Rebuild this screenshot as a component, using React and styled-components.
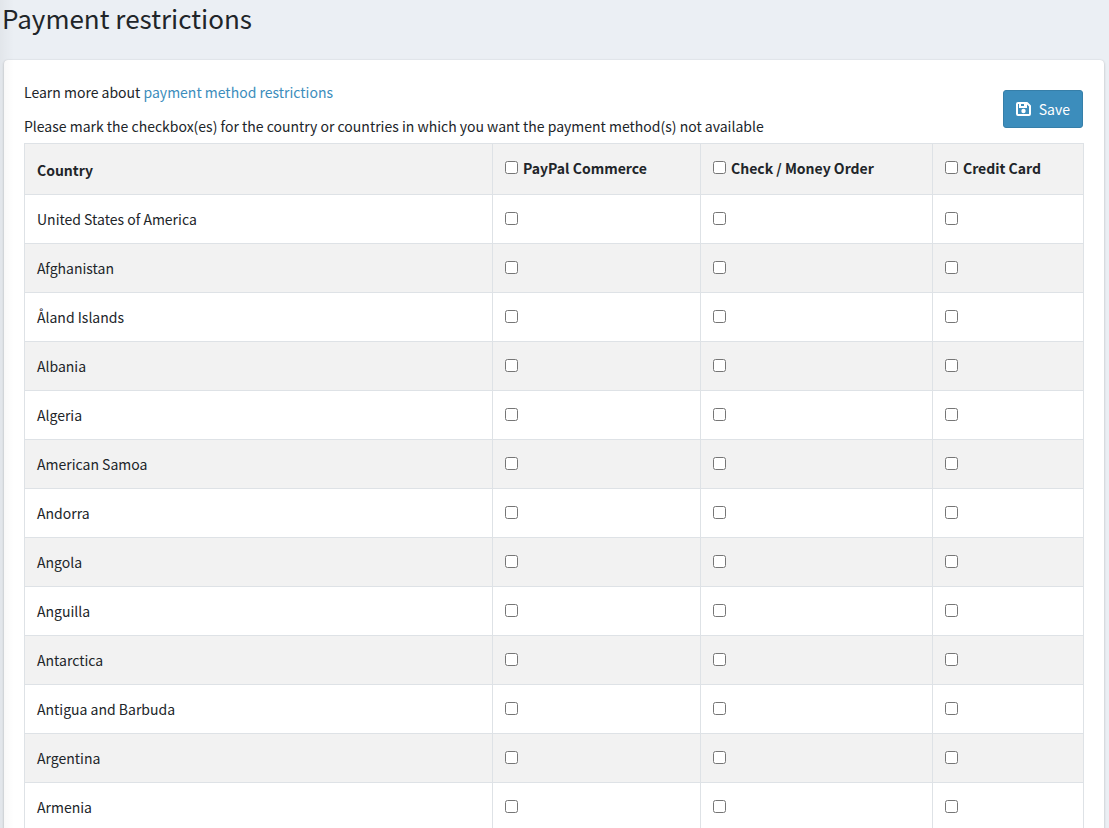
import React from "react";
import styled, { createGlobalStyle } from "styled-components";

const GlobalStyle = createGlobalStyle`
  *, *::before, *::after { box-sizing: border-box; }
  body {
    margin: 0;
    background: #ebeff4;
    color: #212529;
    font-family: "Source Sans Pro", "Noto Sans CJK SC", "Open Sans", sans-serif;
    font-size: 14px;
    line-height: 24px;
  }
`;

const Page = styled.div`
  position: relative;
  height: 100vh;
  overflow: hidden;

  /* shadow cast by the navigation that sits left of the content */
  &::after {
    content: "";
    position: absolute;
    inset: 0 auto 0 0;
    width: 14px;
    background: linear-gradient(to right, rgba(0, 0, 0, 0.04), rgba(0, 0, 0, 0));
    pointer-events: none;
  }
`;

const Title = styled.h1`
  margin: 0 0 24px;
  padding-left: 2px;
  font-size: 26px;
  font-weight: 400;
  line-height: 36px;
`;

const Card = styled.main`
  margin: 0 5px 0 4px;
  padding: 20px 20px 40px;
  border-radius: 4px;
  background: #fff;
  box-shadow: 0 0 1px rgba(0, 0, 0, 0.125), 0 1px 3px rgba(0, 0, 0, 0.2);
`;

const Intro = styled.div`
  display: flex;
  align-items: center;
  justify-content: space-between;
  padding-bottom: 5px;
`;

const Paragraph = styled.p`
  margin: 0 0 10px;

  &:last-child { margin-bottom: 0; }
`;

const DocsLink = styled.a`
  color: #3c8dbc;
  text-decoration: none;
`;

const SaveButton = styled.button`
  display: flex;
  align-items: center;
  gap: 8px;
  height: 38px;
  margin-right: 1px;
  padding: 0 12px;
  border: 1px solid #367fa9;
  border-radius: 3px;
  background: #3c8dbc;
  color: #fff;
  font: inherit;
`;

const Table = styled.table`
  width: 100%;
  table-layout: fixed;
  border-collapse: collapse;
`;

const Column = styled.col`
  width: ${({ $width }) => $width};
`;

const Row = styled.tr`
  height: ${({ $head }) => ($head ? 51 : 49)}px;
  background: ${({ $striped }) => ($striped ? "#f2f2f2" : "#fff")};
`;

const HeadCell = styled.th`
  padding: 2px 12px 0;
  border: 1px solid #dee2e6;
  text-align: left;
  font-weight: 700;
`;

const Cell = styled.td`
  padding: 0 12px;
  border: 1px solid #dee2e6;
`;

const MethodLabel = styled.label`
  display: flex;
  align-items: center;
  gap: 5px;
  padding-bottom: 4px;
`;

const Checkbox = styled.input`
  display: block;
  width: 13px;
  height: 13px;
  margin: 0 0 2px;
`;

function SaveIcon() {
  return (
    <svg width="15" height="14" viewBox="0 0 15 14" aria-hidden="true">
      <path
        d="M2 1H11L14 4V12Q14 13 13 13H2Q1 13 1 12V2Q1 1 2 1Z"
        fill="none"
        stroke="currentColor"
        strokeWidth="2"
        strokeLinejoin="round"
      />
      <path d="M3 1H11V6H3ZM5 2V4H8V2Z" fill="currentColor" fillRule="evenodd" />
      <circle cx="7.5" cy="9" r="2.2" fill="currentColor" />
    </svg>
  );
}

const methods = [
  { name: "PayPal Commerce", width: "208px" },
  { name: "Check / Money Order", width: "232px" },
  { name: "Credit Card", width: "151px" },
];

const countries = [
  "United States of America",
  "Afghanistan",
  "Åland Islands",
  "Albania",
  "Algeria",
  "American Samoa",
  "Andorra",
  "Angola",
  "Anguilla",
  "Antarctica",
  "Antigua and Barbuda",
  "Argentina",
  "Armenia",
];

export default function App() {
  return (
    <Page>
      <GlobalStyle />
      <Title>Payment restrictions</Title>
      <Card>
        <Intro>
          <div>
            <Paragraph>
              Learn more about <DocsLink href="#docs">payment method restrictions</DocsLink>
            </Paragraph>
            <Paragraph>
              Please mark the checkbox(es) for the country or countries in which you want the
              payment method(s) not available
            </Paragraph>
          </div>
          <SaveButton type="button">
            <SaveIcon />
            Save
          </SaveButton>
        </Intro>
        <Table>
          <colgroup>
            <Column $width="auto" />
            {methods.map((m) => (
              <Column key={m.name} $width={m.width} />
            ))}
          </colgroup>
          <thead>
            <Row $head $striped>
              <HeadCell scope="col">Country</HeadCell>
              {methods.map((m) => (
                <HeadCell key={m.name} scope="col">
                  <MethodLabel>
                    <Checkbox type="checkbox" />
                    {m.name}
                  </MethodLabel>
                </HeadCell>
              ))}
            </Row>
          </thead>
          <tbody>
            {countries.map((country, i) => (
              <Row key={country} $striped={i % 2 === 1}>
                <Cell>{country}</Cell>
                {methods.map((m) => (
                  <Cell key={m.name}>
                    <Checkbox type="checkbox" aria-label={`${m.name}: ${country}`} />
                  </Cell>
                ))}
              </Row>
            ))}
          </tbody>
        </Table>
      </Card>
    </Page>
  );
}
